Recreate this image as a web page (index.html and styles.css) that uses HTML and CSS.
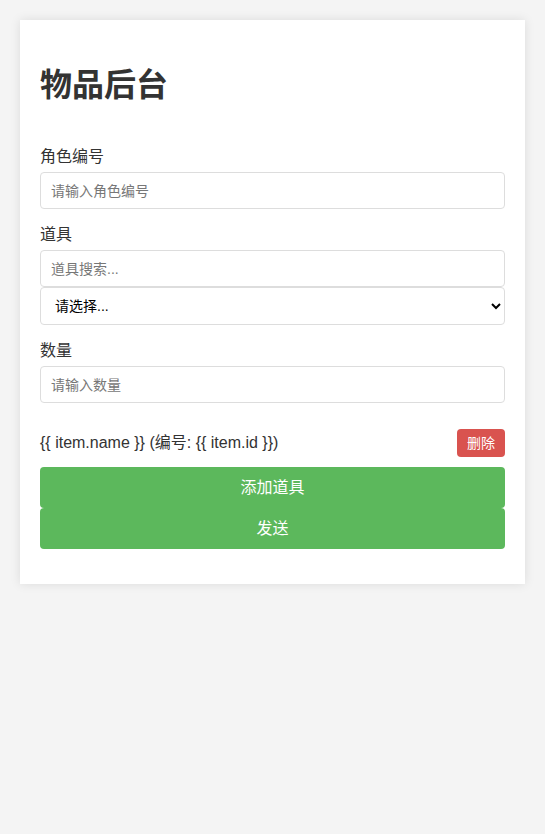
FILE: index.html
```html
<!DOCTYPE html>
<html lang="zh">
<head>
<meta charset="utf-8">
<title>物品后台</title>
<link rel="stylesheet" href="styles.css">
</head>
<body>
<div class="card">
  <h1 class="title">物品后台</h1>
  <div class="group">
    <label class="label">角色编号</label>
    <input class="field" type="text" placeholder="请输入角色编号">
  </div>
  <div class="group">
    <label class="label">道具</label>
    <input class="field" type="text" placeholder="道具搜索...">
    <select class="field select">
      <option>请选择...</option>
    </select>
  </div>
  <div class="group">
    <label class="label">数量</label>
    <input class="field" type="text" placeholder="请输入数量">
  </div>
  <div class="item-row">
    <span class="item-text">{{ item.name }} (编号: {{ item.id }})</span>
    <button class="btn-del">删除</button>
  </div>
  <button class="btn-green btn-add">添加道具</button>
  <button class="btn-green btn-send">发送</button>
</div>
</body>
</html>
```
FILE: styles.css
```css
html, body {
  margin: 0;
  padding: 0;
}
body {
  background: #f4f4f4;
  padding: 20px;
  font-family: "Liberation Sans", "Noto Sans CJK SC", sans-serif;
  font-size: 16px;
  color: #333;
}
.card {
  background: #fff;
  padding: 20px;
  box-shadow: 0 0 10px rgba(0, 0, 0, 0.1);
}
.title {
  margin: 21px 0 37px;
  font-size: 32px;
  line-height: 48px;
  font-weight: bold;
  color: #333;
}
.group {
  margin-bottom: 15px;
}
.label {
  display: block;
  line-height: 22px;
  margin-bottom: 4px;
  font-size: 16px;
  color: #333;
}
.field {
  display: block;
  width: 100%;
  box-sizing: border-box;
  height: 37px;
  padding: 10px;
  border: 1px solid #ddd;
  border-radius: 4px;
  font-family: "Liberation Sans", "Noto Sans CJK SC", sans-serif;
  font-size: 14px;
  line-height: 15px;
  color: #333;
  background: #fff;
}
.field::placeholder {
  color: #777;
}
.select {
  height: 38px;
  padding: 0 8px 0 10px;
  color: #000;
  font-size: 14px;
}
.item-row {
  display: flex;
  justify-content: space-between;
  align-items: center;
  margin-top: 26px;
}
.item-text {
  font-size: 16px;
  line-height: 22px;
  color: #333;
}
.btn-del {
  background: #d9534f;
  color: #fff;
  border: none;
  border-radius: 4px;
  padding: 5px 10px;
  font-family: "Liberation Sans", "Noto Sans CJK SC", sans-serif;
  font-size: 14px;
  line-height: 18px;
  height: 28px;
}
.btn-green {
  display: block;
  width: 100%;
  height: 41px;
  border: none;
  border-radius: 4px;
  background: #5cb85c;
  color: #fff;
  font-family: "Liberation Sans", "Noto Sans CJK SC", sans-serif;
  font-size: 16px;
  line-height: 21px;
  padding: 10px;
}
.btn-add {
  margin-top: 10px;
}
.btn-send {
  margin-bottom: 15px;
}
```
